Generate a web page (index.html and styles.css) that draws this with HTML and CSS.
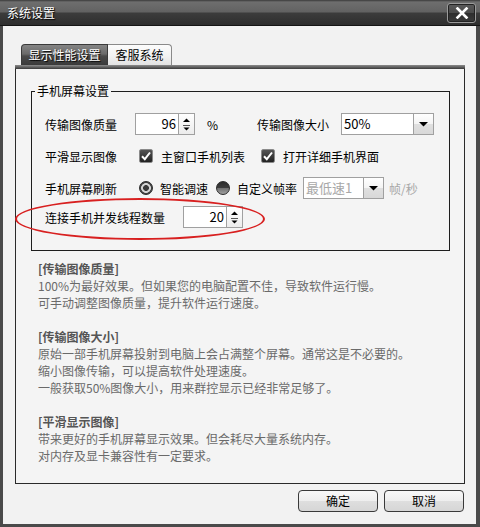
FILE: index.html
```html
<!DOCTYPE html>
<html lang="zh-CN">
<head>
<meta charset="utf-8">
<title>系统设置</title>
<link rel="stylesheet" href="styles.css">
</head>
<body>
<div class="window">
  <div class="titlebar">
    <span class="title">系统设置</span>
    <button class="close" type="button" aria-label="关闭">
      <svg width="14" height="12" viewBox="0 0 14 12"><path d="M2.5 1.5 L11.5 10.5 M11.5 1.5 L2.5 10.5" stroke="#fff" stroke-width="2.6" stroke-linecap="square"/></svg>
    </button>
  </div>
  <div class="client">
    <div class="tabs">
      <div class="tab active">显示性能设置</div>
      <div class="tab inactive">客服系统</div>
    </div>
    <div class="panel">
      <fieldset class="group">
        <legend>手机屏幕设置</legend>
        <div class="row">
          <span class="lbl w90">传输图像质量</span>
          <div class="spin">
            <span class="val">96</span>
            <span class="arrows"><svg width="15" height="20" viewBox="0 0 15 20"><path d="M4 8 L11 8 L7.5 4.5 Z" fill="#000"/><path d="M4 11.5 L11 11.5" stroke="#555" stroke-width="1"/><path d="M4.5 13.5 L10.5 13.5 L7.5 16.5 Z" fill="#000"/></svg></span>
          </div>
          <span class="unit">%</span>
          <span class="lbl w84">传输图像大小</span>
          <div class="combo w93">
            <span class="val">50%</span>
            <span class="drop"><svg width="19" height="20" viewBox="0 0 19 20"><path d="M5 8 L14 8 L9.5 12.5 Z" fill="#000"/></svg></span>
          </div>
        </div>
        <div class="row r2">
          <span class="lbl w94">平滑显示图像</span>
          <span class="check"><svg width="14" height="14" viewBox="0 0 14 14"><path d="M3 7.2 L5.8 10.2 L11 3.5" fill="none" stroke="#fff" stroke-width="2"/></svg></span>
          <span class="opt">主窗口手机列表</span>
          <span class="check c2"><svg width="14" height="14" viewBox="0 0 14 14"><path d="M3 7.2 L5.8 10.2 L11 3.5" fill="none" stroke="#fff" stroke-width="2"/></svg></span>
          <span class="opt">打开详细手机界面</span>
        </div>
        <div class="row r3">
          <span class="lbl w94">手机屏幕刷新</span>
          <span class="radio on"></span>
          <span class="ropt">智能调速</span>
          <span class="radio off"></span>
          <span class="ropt">自定义帧率</span>
          <div class="combo w81 disabled">
            <span class="val">最低速1</span>
            <span class="drop"><svg width="19" height="20" viewBox="0 0 19 20"><path d="M5 8 L14 8 L9.5 12.5 Z" fill="#000"/></svg></span>
          </div>
          <span class="fps">帧/秒</span>
        </div>
        <div class="row r4">
          <span class="lbl w138">连接手机并发线程数量</span>
          <div class="spin">
            <span class="val">20</span>
            <span class="arrows"><svg width="15" height="20" viewBox="0 0 15 20"><path d="M4 8 L11 8 L7.5 4.5 Z" fill="#000"/><path d="M4 11.5 L11 11.5" stroke="#555" stroke-width="1"/><path d="M4.5 13.5 L10.5 13.5 L7.5 16.5 Z" fill="#000"/></svg></span>
          </div>
          <span class="mark"></span>
        </div>
      </fieldset>
      <div class="help">
        <div class="sec">
          <div class="h">[传输图像质量]</div>
          <div>100%为最好效果。但如果您的电脑配置不佳，导致软件运行慢。</div>
          <div>可手动调整图像质量，提升软件运行速度。</div>
        </div>
        <div class="sec">
          <div class="h">[传输图像大小]</div>
          <div>原始一部手机屏幕投射到电脑上会占满整个屏幕。通常这是不必要的。</div>
          <div>缩小图像传输，可以提高软件处理速度。</div>
          <div>一般获取50%图像大小，用来群控显示已经非常足够了。</div>
        </div>
        <div class="sec">
          <div class="h">[平滑显示图像]</div>
          <div>带来更好的手机屏幕显示效果。但会耗尽大量系统内存。</div>
          <div>对内存及显卡兼容性有一定要求。</div>
        </div>
      </div>
    </div>
    <div class="footer">
      <button class="btn" type="button">确定</button>
      <button class="btn" type="button">取消</button>
    </div>
  </div>
</div>
</body>
</html>
```
FILE: styles.css
```css
html, body {
  margin: 0;
  padding: 0;
}
body {
  width: 480px;
  height: 527px;
  overflow: hidden;
  font-family: "Noto Sans CJK SC", "Noto Sans", sans-serif;
  font-size: 12px;
  color: #000;
}
.window {
  height: 527px;
  display: flex;
  flex-direction: column;
  background: #4a4a4a;
}
.titlebar {
  height: 25px;
  flex: none;
  display: flex;
  align-items: center;
  justify-content: space-between;
  padding: 0 4px 0 7px;
  background: linear-gradient(#3a3a3a 0, #6e6e6e 2px, #626262 12px, #3c3c3c 13px, #2e2e2e 100%);
  border-bottom: 1px solid #151515;
}
.title {
  color: #fff;
  line-height: 16px;
  text-shadow: 1px 1px 1px #000;
}
.close {
  width: 29px;
  height: 20px;
  padding: 0;
  margin: 0;
  display: flex;
  align-items: center;
  justify-content: center;
  border: 1px solid #9a9a9a;
  border-radius: 3px;
  background: linear-gradient(#5a5a5a 0, #4a4a4a 50%, #2e2e2e 51%, #3a3a3a 100%);
  box-shadow: inset 0 0 0 1px #222;
}
.client {
  flex: 1;
  margin: 0 4px 3px 3px;
  background: #f2f2f2;
  padding: 18px 11px 0 12px;
  display: flex;
  flex-direction: column;
}
.tabs {
  display: flex;
  margin-left: 6px;
  height: 21px;
}
.tab {
  height: 21px;
  box-sizing: border-box;
  line-height: 20px;
  text-align: center;
}
.tab.active {
  width: 87px;
  color: #fff;
  text-shadow: 1px 1px 1px #000;
  background: linear-gradient(#858585 0, #6a6a6a 45%, #4a4a4a 55%, #3a3a3a 100%);
  border: 1px solid #3a3a3a;
  border-bottom: none;
  border-radius: 4px 0 0 0;
}
.tab.inactive {
  width: 64px;
  background: linear-gradient(#fcfcfc 0, #f2f2f2 55%, #e2e2e2 100%);
  border: 1px solid #8a8a8a;
  border-left: none;
  border-bottom: none;
  border-radius: 0 4px 0 0;
}
.panel {
  height: 419px;
  box-sizing: border-box;
  border: 1px solid #2a2a2a;
  border-top: none;
  background: #f4f4f4;
}
.panel::before {
  content: "";
  display: block;
  height: 4px;
  margin: 0 -1px;
  background: linear-gradient(#8c8c8c, #3a3a3a);
}
.group {
  margin: 14px 14px 0 15px;
  padding: 14px 0 22px 0;
  border: 1px solid #1e1e1e;
  min-width: 0;
}
.group legend {
  margin-left: 3px;
  padding: 0 2px;
  line-height: 16px;
}
.row {
  display: flex;
  align-items: center;
  height: 22px;
  padding-left: 13px;
}
.r2, .r3 { margin-top: 10px; }
.r4 { margin-top: 7px; position: relative; }
.lbl { flex: none; white-space: nowrap; }
.w90 { width: 90px; }
.w84 { width: 84px; }
.w94 { width: 94px; }
.w138 { width: 138px; }
.spin {
  width: 60px;
  height: 22px;
  box-sizing: border-box;
  border: 1px solid #a0a0a0;
  background: #fff;
  display: flex;
  flex: none;
}
.spin .val {
  flex: 1;
  text-align: right;
  padding-right: 2px;
  line-height: 20px;
  font-size: 13px;
}
.arrows {
  width: 15px;
  border-left: 1px solid #a0a0a0;
  background: linear-gradient(#ffffff, #ececec);
  display: flex;
}
.unit {
  width: 50px;
  margin-left: 12px;
  flex: none;
}
.combo {
  height: 22px;
  box-sizing: border-box;
  border: 1px solid #a0a0a0;
  background: #fff;
  display: flex;
  flex: none;
}
.w93 { width: 93px; }
.w81 { width: 81px; margin-left: 6px; }
.combo .val {
  flex: 1;
  padding-left: 2px;
  line-height: 20px;
  font-size: 13px;
  white-space: nowrap;
}
.combo.disabled .val { color: #a8a8a8; }
.drop {
  width: 19px;
  border-left: 1px solid #a0a0a0;
  background: linear-gradient(#ffffff 0, #f4f4f4 50%, #e0e0e0 51%, #d8d8d8 100%);
  display: flex;
}
.check {
  width: 14px;
  height: 14px;
  flex: none;
  box-sizing: border-box;
  border: 1px solid #8a8a8a;
  border-radius: 2px;
  background: linear-gradient(#555, #222);
  display: flex;
}
.check svg { margin: -1px; }
.c2 { margin-left: 16px; }
.opt { margin-left: 8px; white-space: nowrap; }
.radio {
  width: 14px;
  height: 14px;
  flex: none;
  box-sizing: border-box;
  border-radius: 50%;
}
.radio.on {
  background: radial-gradient(circle, #3a3a3a 0, #3a3a3a 2.6px, #d4d4d4 3.2px, #d4d4d4 4.6px, #444 5.2px);
  border: 1px solid #2a2a2a;
}
.radio.off {
  margin-left: 8px;
  border: 1px solid #2a2a2a;
  background: linear-gradient(#2c2c2c 0, #3c3c3c 50%, #707070 52%, #a0a0a0 100%);
}
.ropt { margin-left: 7px; white-space: nowrap; }
.fps { margin-left: 5px; color: #a8a8a8; white-space: nowrap; }
.mark {
  position: absolute;
  left: -17px;
  top: -8px;
  width: 250px;
  height: 42px;
  box-sizing: border-box;
  border: 2px solid #d82020;
  border-radius: 50%;
  pointer-events: none;
}
.help {
  margin: 9px 0 0 22px;
  line-height: 17px;
  color: #6a6a6a;
  white-space: nowrap;
}
.help .sec + .sec { margin-top: 17px; }
.help .h { font-weight: bold; color: #555; }
.footer {
  display: flex;
  justify-content: flex-end;
  gap: 6px;
  margin-top: 6px;
  padding-right: 1px;
}
.btn {
  width: 80px;
  height: 22px;
  padding: 0;
  box-sizing: border-box;
  border: 1px solid #3a3a3a;
  border-radius: 4px;
  background: linear-gradient(#f8f8f8 0, #eeeeee 50%, #dedede 52%, #d6d6d6 100%);
  font-family: "Noto Sans CJK SC", "Noto Sans", sans-serif;
  font-size: 12px;
  color: #000;
  line-height: 20px;
}
```
